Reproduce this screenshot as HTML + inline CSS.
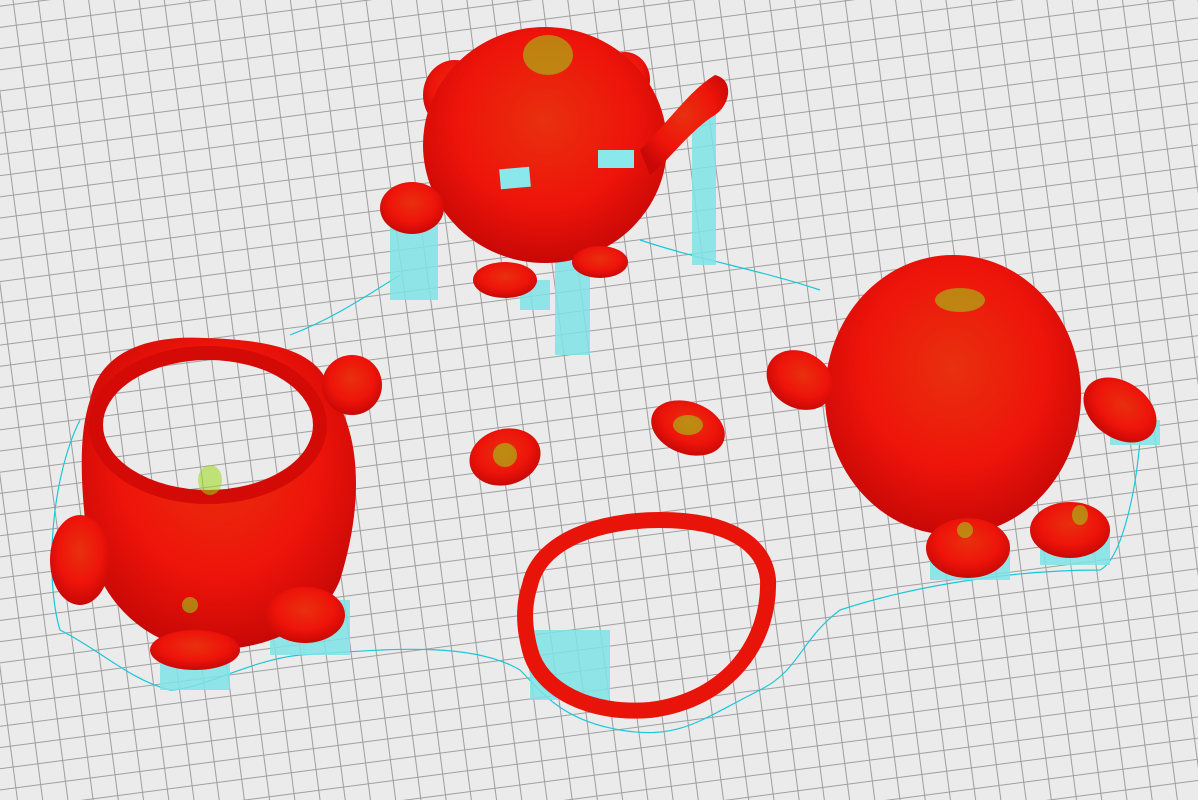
<!DOCTYPE html>
<html><head><meta charset="utf-8"><style>
html,body{margin:0;padding:0}
body{width:1198px;height:800px;overflow:hidden;background:#ebebeb;}
svg{position:absolute;left:0;top:0}
</style></head><body>
<svg width="1198" height="800" viewBox="0 0 1198 800">
<defs>
<pattern id="g" width="25" height="21" patternUnits="userSpaceOnUse" patternTransform="translate(13 4) rotate(-7.5)">
<path d="M0 0.5H25M0.5 0V21" stroke="#a0a0a0" stroke-width="1.1" fill="none"/>
</pattern>
<radialGradient id="r" cx="50%" cy="40%" r="60%">
<stop offset="0" stop-color="#e8300e"/><stop offset="0.6" stop-color="#ee140a"/><stop offset="1" stop-color="#c80806"/>
</radialGradient>
</defs>
<rect width="1198" height="800" fill="url(#g)"/>
<g fill="none" stroke="#19c8d8" stroke-width="1.2">
<path d="M400 275 C360 300 330 320 290 335 M640 240 C700 260 760 270 820 290 M1140 440 C1135 500 1120 560 1100 570 C1000 570 900 590 840 610 C800 640 800 670 760 690 C700 720 680 740 620 730 C560 720 540 690 520 670 C470 640 380 650 300 655 C250 660 200 690 170 690 C130 680 100 650 60 630 C45 580 50 480 80 420"/>
</g>
<g fill="#7fe3e8" opacity="0.85">
<rect x="390" y="215" width="48" height="85"/>
<rect x="555" y="240" width="35" height="115"/>
<rect x="692" y="110" width="24" height="155"/>
<rect x="520" y="280" width="30" height="30"/>
<rect x="160" y="630" width="70" height="60"/>
<rect x="270" y="600" width="80" height="55"/>
<rect x="930" y="540" width="80" height="40"/>
<rect x="1040" y="525" width="70" height="40"/>
<rect x="1110" y="420" width="50" height="25"/>
<rect x="530" y="630" width="80" height="70"/>
</g>
<g fill="url(#r)">
<ellipse cx="455" cy="95" rx="32" ry="35"/>
<ellipse cx="625" cy="80" rx="25" ry="28"/>
<ellipse cx="545" cy="145" rx="122" ry="118"/>
<ellipse cx="412" cy="208" rx="32" ry="26"/>
<path d="M640 150 C670 120 690 90 715 75 C735 80 730 105 715 115 C690 130 665 165 650 175 Z"/>
<ellipse cx="505" cy="280" rx="32" ry="18"/>
<ellipse cx="600" cy="262" rx="28" ry="16"/>
<ellipse cx="953" cy="395" rx="128" ry="140"/>
<ellipse cx="800" cy="380" rx="35" ry="28" transform="rotate(30 800 380)"/>
<ellipse cx="1120" cy="410" rx="40" ry="28" transform="rotate(35 1120 410)"/>
<ellipse cx="968" cy="548" rx="42" ry="30"/>
<ellipse cx="1070" cy="530" rx="40" ry="28"/>
<path d="M90 400 C100 350 150 335 205 338 C270 340 320 350 330 390 C360 430 365 500 340 580 C320 630 260 650 210 650 C150 650 90 600 85 520 C80 470 80 430 90 400 Z"/>
<ellipse cx="352" cy="385" rx="30" ry="30"/>
<ellipse cx="80" cy="560" rx="30" ry="45"/>
<ellipse cx="305" cy="615" rx="40" ry="28"/>
<ellipse cx="195" cy="650" rx="45" ry="20"/>
<ellipse cx="505" cy="457" rx="36" ry="28" transform="rotate(-15 505 457)"/>
<ellipse cx="688" cy="428" rx="38" ry="26" transform="rotate(20 688 428)"/>
</g>
<ellipse cx="208" cy="425" rx="112" ry="72" fill="#ebebeb"/>
<ellipse cx="208" cy="425" rx="112" ry="72" fill="url(#g)"/>
<ellipse cx="208" cy="425" rx="112" ry="72" fill="none" stroke="#d40a06" stroke-width="14"/>
<path d="M530 585 C540 540 600 520 660 520 C730 520 765 545 768 580 C770 640 730 700 650 710 C590 715 540 690 530 650 C522 620 525 600 530 585 Z" fill="none" stroke="#e8140a" stroke-width="16"/>
<g fill="#9ad818" opacity="0.55">
<ellipse cx="548" cy="55" rx="25" ry="20"/>
<ellipse cx="210" cy="480" rx="12" ry="15"/>
<ellipse cx="960" cy="300" rx="25" ry="12"/>
<ellipse cx="688" cy="425" rx="15" ry="10"/>
<ellipse cx="505" cy="455" rx="12" ry="12"/>
<ellipse cx="1080" cy="515" rx="8" ry="10"/>
<ellipse cx="965" cy="530" rx="8" ry="8"/>
<ellipse cx="190" cy="605" rx="8" ry="8"/>
</g>
<g fill="#8ae8ea">
<rect x="500" y="168" width="30" height="20" transform="rotate(-5 515 178)"/>
<rect x="598" y="150" width="36" height="18"/>
</g>
</svg>
</body></html>
